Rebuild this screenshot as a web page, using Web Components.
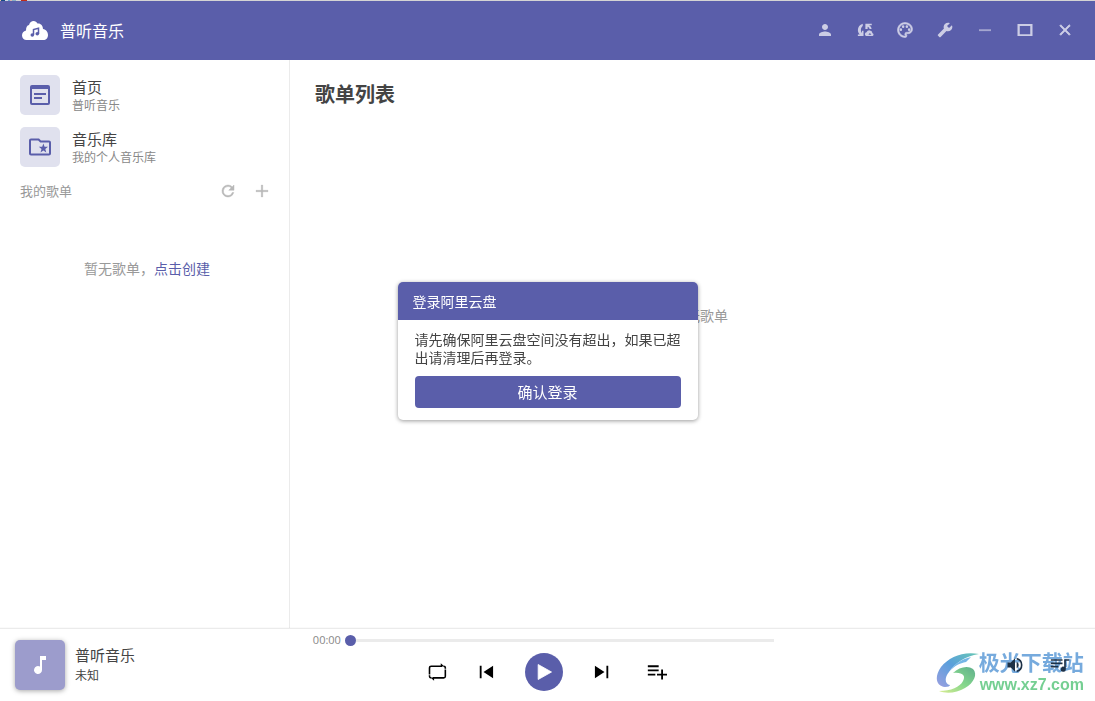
<!DOCTYPE html>
<html lang="zh-CN">
<head>
<meta charset="utf-8">
<title>普听音乐</title>
<style>
html, body { margin: 0; height: 100%; }
body {
  --brand: #5a5eaa;
  --brand-soft: #e0e1ee;
  --line: #ebebeb;
  font-family: "Noto Sans CJK SC", "Noto Sans", sans-serif;
  color: #444;
  background: #fff;
}
</style>
</head>
<body>
<app-shell></app-shell>
<script>
const ICONS = {
  cloud: '<path fill="currentColor" d="M4.500 19C2 19 0 17 0 14.500c0-2.500 1.500-4.500 4-5C4 6 5 4.500 7 4c1-3 2.500-4 4.500-4 2 0 3 1 4 2.500 3-.5 5.500 2 5.500 5.500 3 .5 5 3 5 6 0 3-2 5-4.500 5z"/><path d="M11.500 14V8.500l5-1.200V13" fill="none" stroke="#5a5eaa" stroke-width="1.500"/><circle cx="10.300" cy="14" r="1.800" fill="#5a5eaa"/><circle cx="15.300" cy="12.800" r="1.800" fill="#5a5eaa"/>',
  person: '<path d="M12 12c2.210 0 4-1.790 4-4s-1.790-4-4-4-4 1.790-4 4 1.790 4 4 4zm0 2c-2.670 0-8 1.340-8 4v2h16v-2c0-2.660-5.330-4-8-4z"/>',
  sync: '<path d="M9 3.500v3C7.500 7.500 6.500 9.500 6.500 12c0 1.500.5 3 1.500 4v-3h2v7H2.500v-2H5c-1.500-1.500-2.500-3.500-2.500-6C2.500 8 5 4.500 9 3.500zM12.500 3.500H21v2.300h-3.500c1.800 1.200 3 2.800 3.300 4.700h-2.600c-.5-1.200-1.300-2-2.700-2.700v3h-3zM22 16.200a4.200 4.200 0 0 0-8-1.200 2.600 2.600 0 0 0-.5 5H22a2 2 0 0 0 0-3.800zm-5.500 2 2-2.200 2 2.200z" fill-rule="evenodd"/>',
  palette: '<path stroke="currentColor" stroke-width=".8" d="M12 22C6.490 22 2 17.510 2 12S6.490 2 12 2s10 4.040 10 9c0 3.310-2.690 6-6 6h-1.770c-.28 0-.5.22-.5.5 0 .12.05.23.13.33.41.47.64 1.060.64 1.670A2.500 2.500 0 0 1 12 22zm0-18c-4.410 0-8 3.590-8 8s3.590 8 8 8c.28 0 .5-.22.5-.5a.54.54 0 0 0-.14-.35c-.41-.46-.63-1.050-.63-1.650a2.500 2.500 0 0 1 2.500-2.500H16c2.210 0 4-1.790 4-4 0-3.860-3.590-7-8-7z"/><circle cx="6.500" cy="11.500" r="1.700"/><circle cx="9.500" cy="7.500" r="1.700"/><circle cx="14.500" cy="7.500" r="1.700"/><circle cx="17.500" cy="11.500" r="1.700"/>',
  wrench: '<g transform="matrix(-1 0 0 1 24 0)"><path d="M22.700 19l-9.100-9.100c.9-2.300.4-5-1.500-6.900-2-2-5-2.400-7.400-1.300L9 6 6 9 1.600 4.700C.4 7.100.9 10.100 2.900 12.100c1.900 1.900 4.600 2.400 6.900 1.500l9.100 9.100c.4.4 1 .4 1.400 0l2.300-2.300c.5-.4.5-1.100.1-1.400z"/></g>',
  minimize: '<path opacity=".65" d="M4 11h16v2.500H4z"/>',
  maximize: '<path d="M2 4h20v16H2zm3 2.500v11h14v-11z" fill-rule="evenodd"/>',
  close: '<path d="M19 6.410 17.590 5 12 10.590 6.410 5 5 6.410 10.590 12 5 17.590 6.410 19 12 13.410 17.590 19 19 17.590 13.410 12z" stroke="currentColor" stroke-width="1"/>',
  home: '<path fill-rule="evenodd" d="M4 2h16a2 2 0 0 1 2 2v16a2 2 0 0 1-2 2H4a2 2 0 0 1-2-2V4a2 2 0 0 1 2-2zm0 4v14h16V6zm2 4h12v2H6zm0 4h8v2H6z"/>',
  folder: '<path d="M21 5.500h-8l-2-2H3c-1.100 0-2 .9-2 2v13c0 1.100.9 2 2 2h18c1.100 0 2-.9 2-2v-11c0-1.100-.9-2-2-2zm0 13H3v-13h7.170l2 2H21zM10.800 11.700l2.700 2.200-1 3.600 2.900-2.100 2.900 2.100-1-3.600 2.700-2.200h-3.400L15.400 8.500l-1.200 3.200z"/>',
  refresh: '<path stroke="currentColor" stroke-width=".6" d="M17.650 6.350A7.958 7.958 0 0 0 12 4a8 8 0 1 0 7.730 10h-2.080A6 6 0 1 1 12 6c1.660 0 3.140.69 4.220 1.780L13 11h7V4z"/>',
  plus: '<path stroke="currentColor" stroke-width=".4" d="M11 4h2v7h7v2h-7v7h-2v-7H4v-2h7z"/>',
  note: '<path d="M12 3v10.550A4 4 0 1 0 14 17V7h4V3z"/>',
  repeat: '<path d="M3 15V7a2 2 0 0 1 2-2h13M22 9v8a2 2 0 0 1-2 2H7M3 16v1a2 2 0 0 0 2 2M22 8V7a2 2 0 0 0-2-2" fill="none" stroke="currentColor" stroke-width="1.900"/><path d="M16.500 1.500 21 5.500h-4.500zM8.500 22.500 4 18.500h4.500z"/>',
  prev: '<path d="M4.500 4.500h2.200v15H4.500zM20.500 4.500v15L9 12z"/>',
  next: '<path d="M17.300 4.500h2.200v15h-2.200zM3.500 4.500v15L15 12z"/>',
  play: '<path d="M5 3v18l16-9z" stroke="currentColor" stroke-width="1" stroke-linejoin="round"/>',
  add: '<path d="M1 4h13v2.200H1zM1 9h13v2.200H1zM1 14h9v2.200H1zM17 9h2.200v5H24v2.200h-4.800V21H17v-4.800h-5V14h5z"/>',
  volume: '<path d="M3 9v6h4l5 5V4L7 9zM16.500 12A4.500 4.500 0 0 0 14 7.970v8.050A4.470 4.470 0 0 0 16.500 12zM14 3.230v2.060a7 7 0 0 1 0 13.420v2.060a9 9 0 0 0 0-17.540z"/>',
  queue: '<path d="M15 5H1v2h14zm0 4H1v2h14zM1 15h9v-2H1zM17 5v9.200A3 3 0 1 0 19 17V7h4V5z"/>'
};

function define(name, markup, setup) {
  const template = document.createElement('template');
  template.innerHTML = markup;
  customElements.define(name, class extends HTMLElement {
    constructor() {
      super();
      this.attachShadow({ mode: 'open' }).append(template.content.cloneNode(true));
    }
    connectedCallback() { if (setup) setup(this, this.shadowRoot); }
  });
}

define('app-icon', `
<style>
  :host { display: inline-block; flex: none; width: 20px; height: 20px; }
  svg { display: block; width: 100%; height: 100%; fill: currentColor; }
</style>
<svg aria-hidden="true" viewBox="0 0 24 24"></svg>`, (host, root) => {
  const svg = root.querySelector('svg');
  const name = host.getAttribute('name');
  if (name === 'cloud') svg.setAttribute('viewBox', '0 0 26 19');
  svg.innerHTML = ICONS[name];
});

define('title-bar', `
<style>
  :host {
    display: flex; align-items: center; box-sizing: border-box; height: 60px; padding: 0 10px 0 22px;
    border-top: 1px solid #d4d4d4; background: var(--brand); color: #fff; position: relative;
  }
  :host::before {
    content: ""; position: absolute; left: 0; top: -1px; width: 28px; height: 1px;
    background: linear-gradient(90deg, #e8c9a0 0 1px, #174a86 1px 5px, #cfd9e2 5px 8px, #6aa3cc 8px 10px, #d8b6b0 10px 12px, #88aec4 12px 16px, #d4d4d4 16px 21px, #c02a18 21px 27px, #d4d4d4 27px);
  }
  .logo { width: 26px; height: 19px; }
  h1 { flex: 1; margin: 0 0 2px 12px; font-size: 16px; line-height: 24px; font-weight: 400; }
  nav { display: flex; }
  button { width: 40px; height: 40px; margin: 0 0 2px; padding: 0; border: 0; background: none; color: #cccde5; display: grid; place-items: center; }
  button app-icon { width: 18px; height: 18px; }
  .wrench { width: 16px; height: 16px; }
</style>
<app-icon class="logo" name="cloud"></app-icon>
<h1>普听音乐</h1>
<nav>
  <button aria-label="用户"><app-icon name="person"></app-icon></button>
  <button aria-label="同步"><app-icon name="sync"></app-icon></button>
  <button aria-label="主题"><app-icon name="palette"></app-icon></button>
  <button aria-label="设置"><app-icon class="wrench" name="wrench"></app-icon></button>
  <button aria-label="最小化"><app-icon name="minimize"></app-icon></button>
  <button aria-label="最大化"><app-icon name="maximize"></app-icon></button>
  <button aria-label="关闭"><app-icon name="close"></app-icon></button>
</nav>`);

define('nav-item', `
<style>
  :host { display: block; }
  a { display: flex; align-items: center; gap: 12px; color: inherit; text-decoration: none; }
  .box { display: grid; place-items: center; width: 40px; height: 40px; border-radius: 5px; background: var(--brand-soft); color: var(--brand); }
  .box app-icon { width: 24px; height: 24px; }
  strong, small { display: block; }
  strong { font-size: 15px; line-height: 20px; font-weight: inherit; }
  small { font-size: 12px; line-height: 16px; color: #888; }
</style>
<a href="#"><span class="box"><app-icon></app-icon></span>
<span><strong><slot></slot></strong><small><slot name="note"></slot></small></span></a>`, (host, root) => {
  root.querySelector('app-icon').setAttribute('name', host.getAttribute('icon'));
  root.querySelector('app-icon').connectedCallback();
});

define('side-bar', `
<style>
  :host { display: flex; flex-direction: column; gap: 12px; box-sizing: border-box; width: 290px; padding: 15px 15px 15px 20px; border-right: 1px solid var(--line); }
  header { display: flex; align-items: center; gap: 10px; height: 24px; color: #999; }
  h2 { flex: 1; margin: 0; font-size: 13px; font-weight: inherit; line-height: 20px; }
  button { width: 24px; height: 24px; padding: 0; border: 0; background: none; color: #b8b8b8; display: grid; place-items: center; }
  button app-icon { width: 18px; height: 18px; }
  p { margin: 43px 0 0; text-align: center; font-size: 14px; line-height: 20px; color: #999; }
  p a { color: var(--brand); text-decoration: none; }
</style>
<nav-item icon="home">首页<span slot="note">普听音乐</span></nav-item>
<nav-item icon="folder">音乐库<span slot="note">我的个人音乐库</span></nav-item>
<header><h2>我的歌单</h2>
  <button aria-label="刷新"><app-icon name="refresh"></app-icon></button>
  <button aria-label="新建"><app-icon name="plus"></app-icon></button>
</header>
<p>暂无歌单，<a href="#">点击创建</a></p>`);

define('playlist-view', `
<style>
  :host { display: block; padding: 20px 10px 20px 25px; }
  h2 { margin: 0; font-size: 20px; line-height: 28px; font-weight: 700; color: #444; }
  p { margin: 197px 0 0; text-align: center; font-size: 14px; line-height: 20px; color: #999; }
</style>
<h2>歌单列表</h2>
<p>暂无歌单</p>`);

define('login-dialog', `
<style>
  :host { position: fixed; inset: 0; display: grid; place-items: center; }
  section { width: 300px; border-radius: 5px; overflow: hidden; background: #fff; box-shadow: 0 1px 4px rgba(0,0,0,.4); }
  h2 { margin: 0; padding: 0 15px; background: var(--brand); color: #fff; font-size: 14px; font-weight: 400; line-height: 38px; }
  div { padding: 10px 17px 12px; }
  p { margin: 0 0 10px; font-size: 14px; line-height: 18px; }
  button { display: block; width: 100%; height: 32px; padding: 0; border: 0; border-radius: 4px; background: var(--brand); color: #fff; font: inherit; font-size: 15px; }
</style>
<section role="dialog" aria-labelledby="t">
  <h2 id="t"><slot name="title"></slot></h2>
  <div><p><slot></slot></p><button><slot name="action"></slot></button></div>
</section>`);

define('player-bar', `
<style>
  :host { display: grid; grid-template-columns: 2fr 3fr 2fr; box-sizing: border-box; min-height: 73px; border-top: 1px solid var(--line); box-shadow: 0 -1px 1px rgba(0,0,0,.02); }
  .track { display: flex; align-items: center; gap: 10px; padding-left: 15px; }
  .art { display: grid; place-items: center; width: 50px; height: 50px; border-radius: 5px; background: #9c9ccc; color: #fff; box-shadow: 0 1px 5px rgba(0,0,0,.35); }
  .art app-icon { width: 24px; height: 24px; }
  strong, small { display: block; font-weight: inherit; }
  strong { font-size: 15px; line-height: 20px; }
  small { font-size: 12px; line-height: 20px; }
  .seek { display: flex; align-items: center; gap: 4px; height: 14px; padding: 4px 8px 6px 0; font: 11px/14px "Open Sans", sans-serif; color: #888; }
  .seek input { flex: 1; min-width: 0; height: 11px; margin: 0; appearance: none; background: linear-gradient(#ebebeb, #ebebeb) right center / calc(100% - 4px) 3px no-repeat; }
  .seek input::-webkit-slider-thumb { appearance: none; width: 11px; height: 11px; border-radius: 50%; background: var(--brand); }
  .keys { display: flex; align-items: center; justify-content: center; gap: 29px; }
  button { padding: 0; border: 0; background: none; color: #000; display: grid; place-items: center; }
  .play { width: 38px; height: 38px; border-radius: 50%; background: var(--brand); color: #fff; }
  .add { width: 26px; justify-items: end; }
  .end { display: flex; align-items: center; justify-content: flex-end; gap: 25px; padding-right: 25px; }
  .end button { z-index: 2; color: #1d3147; }
</style>
<div class="track"><span class="art"><app-icon name="note"></app-icon></span><span><strong>普听音乐</strong><small>未知</small></span></div>
<div>
  <div class="seek"><span>00:00</span><input type="range" min="0" max="100" value="0" aria-label="播放进度"></div>
  <div class="keys">
    <button aria-label="循环"><app-icon name="repeat"></app-icon></button>
    <button aria-label="上一首"><app-icon name="prev"></app-icon></button>
    <button class="play" aria-label="播放"><app-icon name="play"></app-icon></button>
    <button aria-label="下一首"><app-icon name="next"></app-icon></button>
    <button class="add" aria-label="添加到歌单"><app-icon name="add"></app-icon></button>
  </div>
</div>
<div class="end">
  <button aria-label="音量"><app-icon name="volume"></app-icon></button>
  <button aria-label="播放列表"><app-icon name="queue"></app-icon></button>
</div>`);

define('site-mark', `
<style>
  :host { position: absolute; right: 11px; bottom: 6px; display: flex; align-items: center; z-index: 1; pointer-events: none; }
  svg { width: 43px; height: 42px; }
  b, i { display: block; font-style: normal; font-family: "Liberation Sans", "Noto Sans CJK SC", sans-serif; font-weight: 700; }
  b { font-size: 21px; line-height: 24px; color: #76aadd; }
  i { font-size: 16px; line-height: 20px; color: #75cf92; padding-left: 1px; }
</style>
<svg viewBox="0 0 43 42" aria-hidden="true">
  <defs>
    <linearGradient id="a" x1="0" y1="1" x2="1" y2="0"><stop offset="0" stop-color="#9b9fe0"/><stop offset=".5" stop-color="#5a9fdc"/><stop offset="1" stop-color="#68c8b4"/></linearGradient>
    <linearGradient id="b" x1="0" y1="1" x2="1" y2="0"><stop offset="0" stop-color="#d9ec92"/><stop offset=".5" stop-color="#85d78c"/><stop offset="1" stop-color="#5fae8c"/></linearGradient>
  </defs>
  <path fill="url(#a)" d="M43 2C27-1 13 5 5 15-2 25 0 34 9 35c3 0 5-1 5-2-5-1-6-7-1-13C19 11 29 4 43 2z"/>
  <path fill="#75b5e6" d="M35 5C26 7 18 12 14 19c4-5 10-8 16-9z"/>
  <path fill="url(#b)" d="M17 21c6-6 15-8 20-4 5 5 1 14-8 19-8 5-19 6-26 3 12 0 21-4 24-10 3-5 0-9-10-8z"/>
</svg>
<span><b>极光下载站</b><i>www.xz7.com</i></span>`);

define('app-shell', `
<style>
  :host { display: flex; flex-direction: column; min-height: 100vh; position: relative; }
  main { flex: 1; display: grid; grid-template-columns: auto 1fr; }
</style>
<title-bar></title-bar>
<main><side-bar></side-bar><playlist-view></playlist-view></main>
<player-bar></player-bar>
<site-mark></site-mark>
<login-dialog><span slot="title">登录阿里云盘</span>请先确保阿里云盘空间没有超出，如果已超出请清理后再登录。<span slot="action">确认登录</span></login-dialog>`);
</script>
</body>
</html>
